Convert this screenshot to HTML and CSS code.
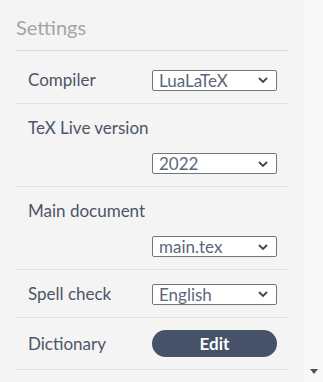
FILE: index.html
```html
<!DOCTYPE html>
<html>
<head>
<meta charset="utf-8">
<link rel="stylesheet" href="styles.css">
</head>
<body>
<div class="frame">
  <div class="panel">
    <h2 class="heading">Settings</h2>
    <div class="list">
      <div class="row">
        <span class="label">Compiler</span>
        <div class="select"><span>LuaLaTeX</span><svg class="chev" width="10" height="6" viewBox="0 0 10 6"><path d="M1 1 L5 5 L9 1" fill="none" stroke="#444" stroke-width="1.8"/></svg></div>
      </div>
      <div class="row stacked">
        <span class="label">TeX Live version</span>
        <div class="select"><span>2022</span><svg class="chev" width="10" height="6" viewBox="0 0 10 6"><path d="M1 1 L5 5 L9 1" fill="none" stroke="#444" stroke-width="1.8"/></svg></div>
      </div>
      <div class="row stacked">
        <span class="label">Main document</span>
        <div class="select"><span>main.tex</span><svg class="chev" width="10" height="6" viewBox="0 0 10 6"><path d="M1 1 L5 5 L9 1" fill="none" stroke="#444" stroke-width="1.8"/></svg></div>
      </div>
      <div class="row">
        <span class="label">Spell check</span>
        <div class="select"><span>English</span><svg class="chev" width="10" height="6" viewBox="0 0 10 6"><path d="M1 1 L5 5 L9 1" fill="none" stroke="#444" stroke-width="1.8"/></svg></div>
      </div>
      <div class="row tall">
        <span class="label">Dictionary</span>
        <button class="btn">Edit</button>
      </div>
    </div>
  </div>
  <div class="scrollbar">
    <svg class="arrow" width="8" height="5" viewBox="0 0 8 5"><path d="M0 0 H8 L4 5 Z" fill="#505050"/></svg>
  </div>
</div>
</body>
</html>
```
FILE: styles.css
```css
html, body {
  margin: 0;
  padding: 0;
}
body {
  background: #f4f4f4;
  font-family: Lato, "Liberation Sans", sans-serif;
}
.frame {
  display: flex;
  width: 323px;
  height: 382px;
  overflow: hidden;
}
.panel {
  width: 273px;
  padding: 0 15px 0 16px;
}
.heading {
  margin: 0;
  padding: 15px 0 11px;
  font-size: 20px;
  line-height: 24px;
  font-weight: 400;
  color: #a5a5a5;
  border-bottom: 1px solid #dcdcdc;
}
.list {
  padding-top: 5px;
}
.row {
  display: flex;
  align-items: center;
  justify-content: space-between;
  padding: 13px 12px 12px;
  border-bottom: 1px solid #e2e2e2;
}
.row.stacked {
  flex-direction: column;
  align-items: stretch;
  gap: 14px;
}
.row.stacked .select {
  align-self: flex-end;
}
.row.tall {
  padding: 12px 12px 12px;
}
.label {
  font-size: 17px;
  line-height: 22px;
  color: #4d5565;
}
.select {
  box-sizing: border-box;
  width: 125px;
  height: 21px;
  display: flex;
  align-items: center;
  justify-content: space-between;
  padding: 0 8px 0 6px;
  background: #fff;
  border: 1px solid #767676;
  border-radius: 2px;
  font-size: 17px;
  color: #5b677a;
}
.chev {
  display: block;
}
.btn {
  box-sizing: border-box;
  width: 125px;
  height: 27px;
  border: 0;
  border-radius: 14px;
  background: #455268;
  color: #fff;
  font-family: Lato, "Liberation Sans", sans-serif;
  font-weight: 700;
  font-size: 17px;
  padding: 0;
}
.scrollbar {
  width: 19px;
  background: #f8f8f8;
  display: flex;
  flex-direction: column;
  justify-content: flex-end;
  align-items: center;
  padding-bottom: 8px;
  box-sizing: border-box;
}
.arrow {
  display: block;
}
```
